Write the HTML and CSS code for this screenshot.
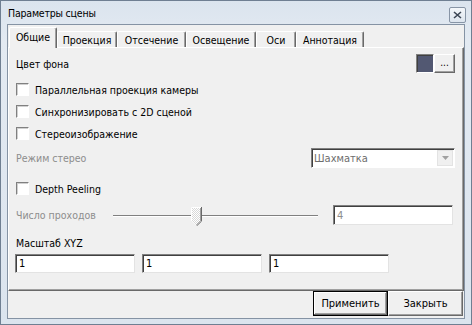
FILE: index.html
```html
<!DOCTYPE html>
<html lang="ru">
<head>
  <meta charset="UTF-8" />
  <title>Параметры сцены</title>
  <link rel="stylesheet" href="styles.css">
</head>
<body>
  <div class="window">
    <div class="titlebar">
      <span class="title">Параметры сцены</span>
      <span class="close">
        <svg width="9" height="8" viewBox="0 0 9 8"><path d="M1 1 L8 7 M8 1 L1 7" stroke="#3c4654" stroke-width="1.6"/></svg>
      </span>
    </div>
    <div class="client">
      <div class="tabs">
        <span class="tab active t-common">Общие</span>
        <span class="tab t-proj">Проекция</span>
        <span class="tab t-clip">Отсечение</span>
        <span class="tab t-light">Освещение</span>
        <span class="tab t-axes">Оси</span>
        <span class="tab t-note">Аннотация</span>
      </div>
      <div class="panel">
        <div class="row r-color">
          <span>Цвет фона</span>
          <span class="spacer"></span>
          <span class="swatch"></span>
          <span class="btn dots">...</span>
        </div>
        <label class="row check r-first"><span class="box"></span>Параллельная проекция камеры</label>
        <label class="row check"><span class="box"></span>Синхронизировать с 2D сценой</label>
        <label class="row check"><span class="box"></span>Стереоизображение</label>
        <div class="row r-stereo">
          <span class="muted">Режим стерео</span>
          <span class="spacer"></span>
          <span class="combo"><span class="combo-text">Шахматка</span><span class="combo-btn"><svg width="7" height="4" viewBox="0 0 7 4"><path d="M0 0 H7 L3.5 4 Z" fill="#a0a0a0"/></svg></span></span>
        </div>
        <label class="row check r-depth"><span class="box"></span>Depth Peeling</label>
        <div class="row r-passes">
          <span class="muted passes-label">Число проходов</span>
          <span class="slider">
            <span class="track"></span>
            <svg class="thumb" width="11" height="19" viewBox="0 0 11 19">
              <defs>
                <pattern id="dither" width="2" height="2" patternUnits="userSpaceOnUse">
                  <rect width="2" height="2" fill="#ffffff"/>
                  <rect width="1" height="1" fill="#d8d8d8"/>
                  <rect x="1" y="1" width="1" height="1" fill="#d8d8d8"/>
                </pattern>
              </defs>
              <path d="M0.5 0.5 H10 V14 L5.5 18.5 L0.5 14 Z" fill="url(#dither)"/>
              <path d="M0.5 14 V0.5 H10" fill="none" stroke="#ffffff"/>
              <path d="M10.5 0 V14.2 L5.5 19" fill="none" stroke="#696969"/>
              <path d="M9.5 1 V13.8 L5.5 17.8" fill="none" stroke="#a0a0a0"/>
            </svg>
          </span>
          <span class="field field-passes muted">4</span>
        </div>
        <div class="row r-scale">Масштаб XYZ</div>
        <div class="row r-fields">
          <span class="field">1</span>
          <span class="field">1</span>
          <span class="field">1</span>
        </div>
      </div>
      <div class="footer">
        <span class="btn default">Применить</span>
        <span class="btn">Закрыть</span>
      </div>
    </div>
  </div>
</body>
</html>
```

FILE: styles.css
```css
body { margin: 0; background: #dbe4ee; }
.window {
  width: 472px; height: 325px; box-sizing: border-box;
  background: linear-gradient(#dbe4ee, #e3eaf2 40px, #dbe4ee);
  border: 1px solid #6f7f92;
  display: flex; flex-direction: column;
  font-family: "DejaVu Sans Condensed", "DejaVu Sans", sans-serif; font-size: 10.5px; color: #000;
}
.titlebar { height: 23px; display: flex; align-items: center; padding: 0 5px 0 7px; }
.title { font-size: 10.5px; letter-spacing: -0.2px; color: #000; flex: 1; }
.close {
  width: 15px; height: 14px; border: 1px solid #8895a6; border-radius: 2px;
  background: linear-gradient(#f4f7fa, #dde5ee);
  display: flex; align-items: center; justify-content: center; margin-top: 4px;
}
.client {
  margin: 0 6px 5px 6px; flex: 1;
  background: #f0f0f0; border: 1px solid #8593a4;
  display: flex; flex-direction: column;
}
.tabs { display: flex; align-items: flex-end; height: 22px; padding-left: 1px; }
.tab {
  height: 16px; box-sizing: border-box; display: flex; align-items: center; justify-content: center;
  border-top: 1px solid #ffffff; border-left: 1px solid #ffffff;
  border-right: 1px solid #696969; box-shadow: inset -1px 0 #a0a0a0;
  border-radius: 2px 2px 0 0;
}
.tab.active { height: 21px; margin-bottom: -1px; background: #f0f0f0; position: relative; z-index: 1; padding-bottom: 2px; }
.t-common { width: 48px; }
.t-proj { width: 60px; }
.t-clip { width: 69px; }
.t-light { width: 70px; }
.t-axes { width: 40px; }
.t-note { width: 68px; }
.panel {
  height: 244px; box-sizing: border-box;
  border-top: 1px solid #ffffff; border-left: 1px solid #ffffff;
  border-right: 1px solid #696969; border-bottom: 1px solid #696969;
  box-shadow: inset -1px -1px #a0a0a0;
  padding: 6px 7px 0 6px;
  display: flex; flex-direction: column;
}
.row { display: flex; align-items: center; }
.spacer { flex: 1; }
.muted { color: #8d8d8d; }
.r-color { height: 19px; padding-left: 1px; }
.swatch {
  width: 16px; height: 17px; background: #525872;
  border-top: 1px solid #808080; border-left: 1px solid #808080;
  border-right: 1px solid #ffffff; border-bottom: 1px solid #ffffff;
  box-shadow: inset 1px 1px #404040;
}
.btn {
  box-sizing: border-box; display: flex; align-items: center; justify-content: center;
  background: #f0f0f0;
  border-top: 1px solid #ffffff; border-left: 1px solid #ffffff;
  border-right: 1px solid #696969; border-bottom: 1px solid #696969;
  box-shadow: inset -1px -1px #a0a0a0;
}
.dots { width: 21px; height: 19px; font-size: 10px; padding-bottom: 2px; margin-right: 1px; }
.check { height: 13px; margin-top: 10px; }
.check + .check { margin-top: 9px; }
.box {
  width: 11px; height: 11px; background: #ffffff; margin-right: 6px; margin-left: 1px;
  border-top: 1px solid #808080; border-left: 1px solid #808080;
  border-right: 1px solid #ffffff; border-bottom: 1px solid #ffffff;
  box-shadow: inset 1px 1px #d0d0d0;
}
.r-stereo { height: 20px; margin-top: 8px; padding-left: 1px; }
.combo {
  width: 144px; height: 20px; box-sizing: border-box; background: #ffffff;
  border-top: 1px solid #808080; border-left: 1px solid #808080;
  border-right: 1px solid #ffffff; border-bottom: 1px solid #ffffff;
  box-shadow: inset 1px 1px #404040;
  display: flex; align-items: center; margin-right: 1px;
}
.combo-text { flex: 1; color: #6d6d6d; padding-left: 2px; font-size: 11px; }
.combo-btn {
  width: 16px; height: 16px; margin-right: 1px; box-sizing: border-box;
  background: #f0f0f0; border: 1px solid #e3e3e3;
  display: flex; align-items: center; justify-content: center;
}
.r-depth { margin-top: 14px; }
.r-passes { height: 20px; margin-top: 10px; padding-left: 1px; }
.passes-label { width: 97px; }
.slider { position: relative; width: 205px; height: 20px; margin-right: 15px; }
.track { position: absolute; left: 0; right: 0; top: 10px; height: 1px; background: #808080; border-bottom: 1px solid #ffffff; }
.thumb { position: absolute; left: 78px; top: 2px; }
.field {
  width: 120px; height: 19px; box-sizing: border-box; background: #ffffff;
  border-top: 1px solid #808080; border-left: 1px solid #808080;
  border-right: 1px solid #e3e3e3; border-bottom: 1px solid #e3e3e3;
  box-shadow: inset 1px 1px #404040;
  display: flex; align-items: center; padding-left: 3px; font-size: 11px;
}
.field-passes { height: 20px; margin-right: 3px; }
.r-scale { height: 13px; margin-top: 11px; padding-left: 1px; }
.r-fields { margin-top: 5px; gap: 7px; }
.footer { display: flex; justify-content: flex-end; padding-right: 1px; }
.footer .btn { width: 75px; height: 25px; font-size: 11px; }
.footer .default { border: 1px solid #000000; box-shadow: inset -1px -1px #696969, inset 1px 1px #ffffff, inset -2px -2px #a0a0a0; }
```
